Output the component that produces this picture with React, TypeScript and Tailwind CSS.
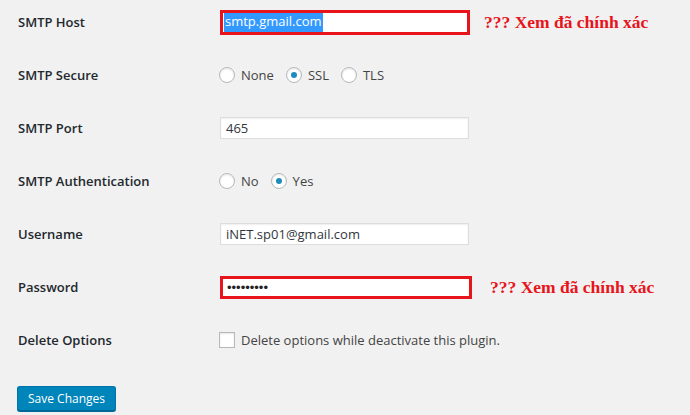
import React from "react";

const font = { fontFamily: '"Open Sans", "Noto Sans", sans-serif' };

const Radio = ({ label, checked }: { label: string; checked?: boolean }) => (
  <span className="flex items-center">
    <span className="w-4 h-4 rounded-full border border-[#b4b9be] bg-white shadow-[inset_0_1px_2px_rgba(0,0,0,0.1)] flex items-center justify-center">
      {checked && <span className="w-[6px] h-[6px] rounded-full bg-[#1e8cbe]" />}
    </span>
    <span className="ml-[6px] text-[13px] text-[#444] pt-[1px]">{label}</span>
  </span>
);

const Row = ({ label, children }: { label: string; children: React.ReactNode }) => (
  <div className="flex items-center h-[22px]">
    <div className="w-[202px] text-[13px] font-semibold text-[#23282d] pt-[1px]">{label}</div>
    <div className="flex items-center">{children}</div>
  </div>
);

const Box = ({ children, className }: { children?: React.ReactNode; className: string }) => (
  <div className={"bg-white flex items-center " + className}>{children}</div>
);

const Note = ({ className }: { className: string }) => (
  <span
    className={"text-[17.5px] font-bold text-[#e8141c] " + className}
    style={{ fontFamily: '"Liberation Serif", "Times New Roman", serif' }}
  >
    ??? Xem đã chính xác
  </span>
);

export default function App() {
  return (
    <div className="w-[690px] h-[415px] bg-[#f1f1f1] overflow-hidden pl-[18px] pt-[11px]" style={font}>
      <div className="flex flex-col gap-[31px]">
        <Row label="SMTP Host">
          <Box className="w-[250px] h-[25px] border-[3px] border-[#e8141c] pl-[1px]">
            <span className="h-[19px] flex items-center bg-[#3399ff] text-white text-[13px] pl-[1px] pr-[1px]">
              smtp.gmail.com
            </span>
          </Box>
          <Note className="ml-[14px]" />
        </Row>
        <Row label="SMTP Secure">
          <div className="flex items-center gap-[12px] -ml-[1px]">
            <Radio label="None" />
            <Radio label="SSL" checked />
            <Radio label="TLS" />
          </div>
        </Row>
        <Row label="SMTP Port">
          <Box className="w-[249px] h-[22px] border border-[#ddd] shadow-[inset_0_1px_2px_rgba(0,0,0,0.07)] pl-[5px]">
            <span className="text-[13px] text-[#32373c] pt-[1px]">465</span>
          </Box>
        </Row>
        <Row label="SMTP Authentication">
          <div className="flex items-center gap-[12px] -ml-[1px]">
            <Radio label="No" />
            <Radio label="Yes" checked />
          </div>
        </Row>
        <Row label="Username">
          <Box className="w-[249px] h-[22px] border border-[#ddd] shadow-[inset_0_1px_2px_rgba(0,0,0,0.07)] pl-[5px]">
            <span className="text-[13px] text-[#32373c] pt-[1px]">iNET.sp01@gmail.com</span>
          </Box>
        </Row>
        <Row label="Password">
          <Box className="w-[252px] h-[23px] border-[3px] border-[#e8141c] pl-[4px]">
            <span
              className="text-[13px] text-[#222] leading-none"
              style={{ fontFamily: '"Liberation Sans", Arial, sans-serif' }}
            >
              •••••••••
            </span>
          </Box>
          <Note className="ml-[18px]" />
        </Row>
        <Row label="Delete Options">
          <div className="flex items-center -ml-[1px]">
            <span className="w-4 h-4 border border-[#b4b9be] bg-white shadow-[inset_0_1px_2px_rgba(0,0,0,0.1)]" />
            <span className="ml-[6px] text-[13px] text-[#444] pt-[1px]">Delete options while deactivate this plugin.</span>
          </div>
        </Row>
      </div>
      <button className="mt-[35px] -ml-[1px] h-[25px] px-[10px] bg-[#0085ba] border border-[#0073aa] border-b-[#006799] rounded-[3px] text-white text-[12px] shadow-[0_1px_0_#006799]">
        Save Changes
      </button>
    </div>
  );
}
